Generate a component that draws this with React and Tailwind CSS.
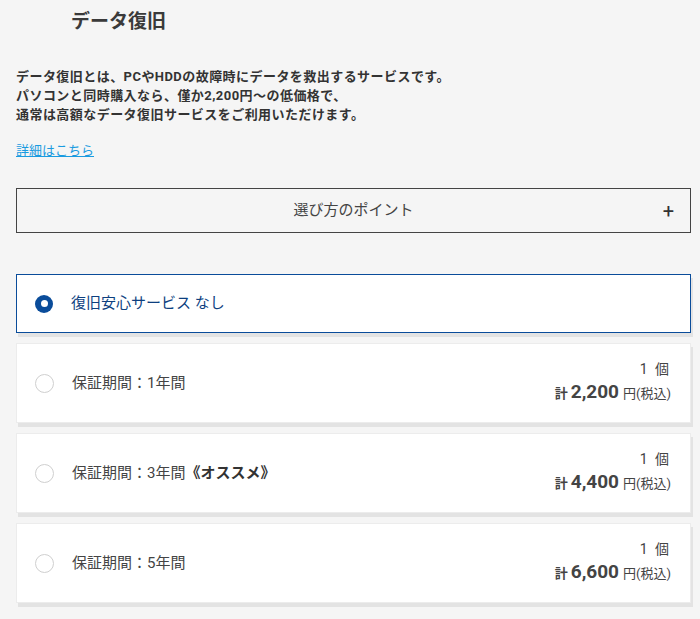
const options = [
  { id: 'none', label: '復旧安心サービス なし' },
  { id: '1y', label: '保証期間：1年間', price: '2,200' },
  { id: '3y', label: '保証期間：3年間', extra: '《オススメ》', price: '4,400' },
  { id: '5y', label: '保証期間：5年間', price: '6,600' },
];

function Radio({ checked }) {
  return checked ? (
    <span className="flex h-[18px] w-[18px] shrink-0 items-center justify-center rounded-full bg-[#0a4c9a]">
      <span className="h-[7px] w-[7px] rounded-full bg-white" />
    </span>
  ) : (
    <span className="h-[19px] w-[19px] shrink-0 rounded-full border border-[#cfcfcf] bg-white" />
  );
}

export default function App() {
  const selected = 'none';

  return (
    <div className="min-h-[619px] w-[700px] bg-[#f5f5f5] pl-4 pr-[9px] pb-4 text-[#333] [font-family:Roboto,'Noto_Sans_CJK_JP',sans-serif]">
      <h2 className="pl-[55px] pt-[9px] text-[19px] font-bold leading-[26px] text-[#3a3a3a]">データ復旧</h2>

      <p className="mt-[32px] text-[13px] font-bold leading-[19px] tracking-[0.45px] text-[#333]">
        データ復旧とは、PCやHDDの故障時にデータを救出するサービスです。<br />
        パソコンと同時購入なら、僅か2,200円～の低価格で、<br />
        通常は高額なデータ復旧サービスをご利用いただけます。
      </p>

      <a href="#" className="mt-[18px] inline-block text-[13px] leading-[18px] text-[#1a9be0] underline">詳細はこちら</a>

      <button className="relative mt-[26px] flex h-[45px] w-full items-center justify-center border border-[#444] bg-[#f5f5f5] px-4 text-[15px] text-[#444]">
        選び方のポイント
        <span className="absolute right-[16px] top-1/2 -translate-y-1/2 text-[20px] font-normal leading-none text-[#333]">+</span>
      </button>

      <div className="mt-[41px] flex flex-col gap-[10px]">
        {options.map((o) => {
          const isSel = o.id === selected;
          return (
            <label
              key={o.id}
              className={`flex items-center bg-white pl-[18px] pr-[19px] shadow-[2px_4px_0_#e3e3e3] ${
                isSel ? 'h-[59px] border border-[#0a4c9a]' : 'h-[80px] border border-[#ececec]'
              }`}
            >
              <Radio checked={isSel} />
              <span className={`ml-[18px] text-[15px] ${isSel ? 'text-[#0d3f7f]' : 'text-[#444]'}`}>
                {o.label}
                {o.extra ? <b className="text-[#333]">{o.extra}</b> : null}
              </span>
              {o.price ? (
                <div className="ml-auto flex flex-col items-end text-[#444]">
                  <span className="text-[14px] leading-[20px] tracking-[2px]">1 個</span>
                  <span className="flex items-baseline leading-[26px]">
                    <span className="text-[13px] font-bold">計</span>
                    <span className="ml-[3px] text-[19px] font-bold">{o.price}</span>
                    <span className="ml-[4px] text-[13px]">円(税込)</span>
                  </span>
                </div>
              ) : null}
            </label>
          );
        })}
      </div>
    </div>
  );
}
